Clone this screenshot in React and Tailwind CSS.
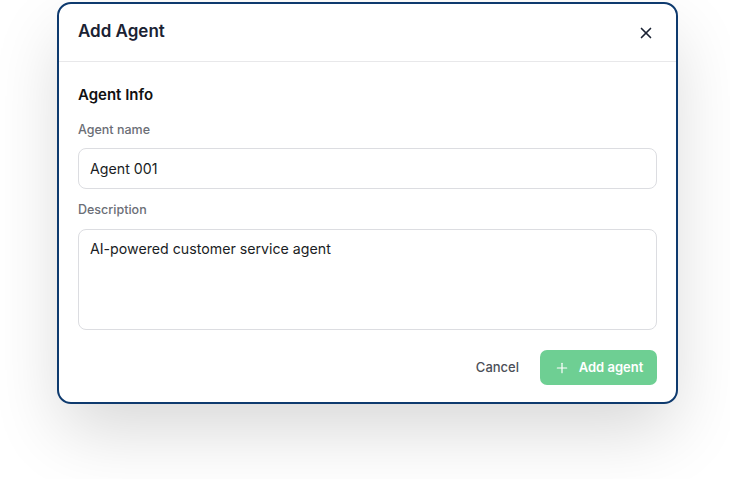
import { X, Plus } from 'lucide-react';

export default function App() {
  return (
    <div className="min-h-[479px] bg-white pt-[2px] font-['Inter',sans-serif]">
      <div className="ml-[57px] w-[621px] rounded-[14px] border-2 border-[#0e3a6e] bg-white shadow-[0_30px_70px_-5px_rgba(0,0,0,0.16)]">
        <div className="flex h-[58px] items-center justify-between border-b border-[#e8e8ea] pl-[19px] pr-[21px]">
          <h2 className="-mt-[2px] text-[17px] font-semibold text-[#1a2233]">Add Agent</h2>
          <X className="h-[18px] w-[18px] text-[#1a2233]" strokeWidth={2.2} />
        </div>

        <div className="px-[19px] pt-[22px] pb-[17px]">
          <h3 className="text-[15px] font-semibold text-[#111111]">Agent Info</h3>

          <label className="mt-[14px] block text-[12.5px] font-medium text-[#6b6e76]">Agent name</label>
          <div className="mt-[9px] flex h-[41px] items-center rounded-[8px] border border-[#dcdde1] px-[11px] text-[14.2px] text-[#1a1d24]">
            Agent 001
          </div>

          <label className="mt-[12px] block text-[12.5px] font-medium text-[#6b6e76]">Description</label>
          <div className="mt-[9px] h-[101px] rounded-[8px] border border-[#dcdde1] px-[11px] pt-[8px] text-[14.2px] text-[#1a1d24]">
            AI-powered customer service agent
          </div>

          <div className="mt-[20px] flex items-center justify-end gap-[21px]">
            <button className="text-[13px] font-medium text-[#4b4f58]">Cancel</button>
            <button className="flex h-[35px] w-[117px] items-center justify-center gap-[9px] rounded-[7px] bg-[#6ecf93] text-[13px] font-semibold text-white">
              <Plus className="h-[16px] w-[16px]" strokeWidth={1.8} />
              Add agent
            </button>
          </div>
        </div>
      </div>
    </div>
  );
}
